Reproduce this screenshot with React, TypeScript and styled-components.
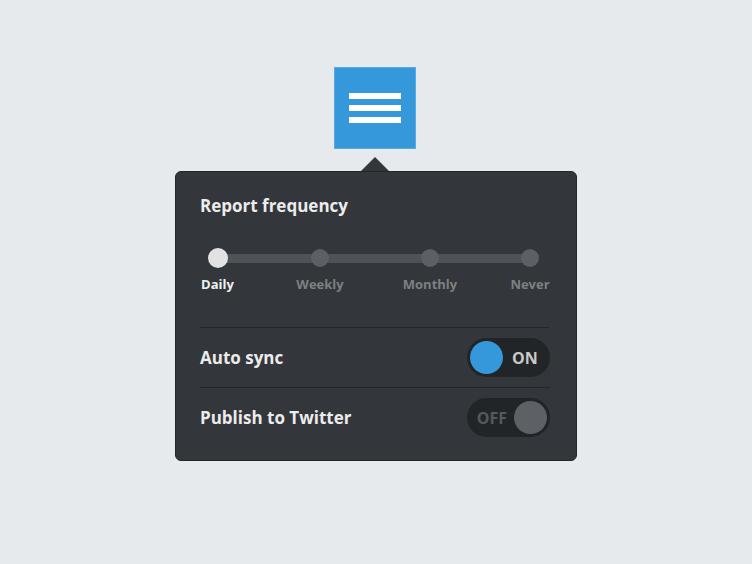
import styled, { createGlobalStyle } from 'styled-components';

const GlobalStyle = createGlobalStyle`
  html, body {
    margin: 0;
    background: #e6eaed;
    font-family: "Open Sans", "Noto Sans", sans-serif;
  }
`;

const Page = styled.div`
  display: flex;
  flex-direction: column;
  align-items: center;
  padding-top: 67px;
  height: 564px;
  box-sizing: border-box;
`;

const MenuButton = styled.button`
  width: 82px;
  height: 82px;
  margin-right: 2px;
  background: #3498db;
  border: 1px solid #5aabe4;
  display: flex;
  flex-direction: column;
  align-items: center;
  justify-content: center;
  gap: 6px;
  padding: 0;
  cursor: pointer;
`;

const Bar = styled.span`
  display: block;
  width: 52px;
  height: 6px;
  background: #ffffff;
`;

const Arrow = styled.div`
  width: 0;
  height: 0;
  margin-top: 8px;
  margin-right: 2px;
  border-left: 14px solid transparent;
  border-right: 14px solid transparent;
  border-bottom: 14px solid #33363a;
`;

const Panel = styled.div`
  width: 402px;
  box-sizing: border-box;
  background: #33363a;
  border: 1px solid #232528;
  border-radius: 6px;
  padding: 24px 27px 13px 24px;
  color: #ececec;
`;

const Title = styled.div`
  font-size: 17px;
  font-weight: 700;
  line-height: 20px;
`;

const Slider = styled.div`
  position: relative;
  display: grid;
  grid-template-columns: 35px 55px 60px 50px 60px 50px 40px;
  margin-top: 32px;
  padding-bottom: 35px;
  border-bottom: 1px solid #24272a;

  &::before {
    content: '';
    position: absolute;
    top: 6px;
    left: 18px;
    right: 20px;
    height: 9px;
    background: #4f5256;
    border-radius: 4px;
  }
`;

const Stop = styled.div<{ $col: number }>`
  grid-column: ${p => p.$col};
  display: flex;
  flex-direction: column;
  align-items: center;
  gap: 8px;
  position: relative;
  white-space: nowrap;
`;

const Dot = styled.span<{ $active?: boolean }>`
  width: ${p => (p.$active ? 20 : 18)}px;
  height: ${p => (p.$active ? 20 : 18)}px;
  margin: ${p => (p.$active ? 0 : 1)}px 0;
  border-radius: 50%;
  background: ${p => (p.$active ? '#e2e2e2' : '#5c5f63')};
`;

const StopLabel = styled.span<{ $active?: boolean }>`
  font-size: 13px;
  font-weight: 700;
  line-height: 16px;
  color: ${p => (p.$active ? '#f0f0f0' : '#7d8084')};
`;

const Row = styled.div<{ $last?: boolean }>`
  display: flex;
  align-items: center;
  justify-content: space-between;
  height: 59px;
  border-bottom: ${p => (p.$last ? 'none' : '1px solid #24272a')};
  margin-right: -1px;
`;

const RowLabel = styled.span`
  font-size: 17px;
  font-weight: 700;
`;

const Toggle = styled.div<{ $on: boolean }>`
  width: 83px;
  height: 39px;
  box-sizing: border-box;
  border-radius: 20px;
  background: #222528;
  padding: 3px;
  display: flex;
  align-items: center;
  flex-direction: ${p => (p.$on ? 'row' : 'row-reverse')};
  gap: ${p => (p.$on ? 9 : 7)}px;
`;

const Knob = styled.span<{ $on: boolean }>`
  width: 33px;
  height: 33px;
  border-radius: 50%;
  background: ${p => (p.$on ? '#3498db' : '#5d6064')};
`;

const ToggleText = styled.span<{ $on: boolean }>`
  font-size: 16px;
  font-weight: 700;
  color: ${p => (p.$on ? '#c9c9c9' : '#55595d')};
`;

const stops = ['Daily', 'Weekly', 'Monthly', 'Never'];

const Switch = ({ on }: { on: boolean }) => (
  <Toggle $on={on}>
    <Knob $on={on} />
    <ToggleText $on={on}>{on ? 'ON' : 'OFF'}</ToggleText>
  </Toggle>
);

const App = () => {
  return (
    <Page>
      <GlobalStyle />
      <MenuButton aria-label='menu'>
        <Bar />
        <Bar />
        <Bar />
      </MenuButton>
      <Arrow />
      <Panel>
        <Title>Report frequency</Title>
        <Slider>
          {stops.map((s, i) => (
            <Stop key={s} $col={i * 2 + 1}>
              <Dot $active={i === 0} />
              <StopLabel $active={i === 0}>{s}</StopLabel>
            </Stop>
          ))}
        </Slider>
        <Row>
          <RowLabel>Auto sync</RowLabel>
          <Switch on={true} />
        </Row>
        <Row $last>
          <RowLabel>Publish to Twitter</RowLabel>
          <Switch on={false} />
        </Row>
      </Panel>
    </Page>
  );
};

export default App;
